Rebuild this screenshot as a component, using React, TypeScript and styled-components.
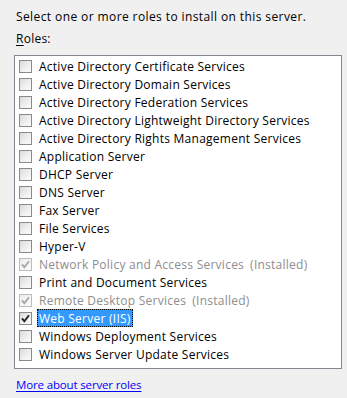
import React from "react";
import styled, { createGlobalStyle } from "styled-components";

const Global = createGlobalStyle`
  html, body { margin: 0; padding: 0; background: #f0f0f0; }
  body { font-family: "Open Sans", "Noto Sans", sans-serif; font-size: 12px; letter-spacing: 0.25px; color: #000; }
`;

const Page = styled.div`
  width: 347px;
  height: 398px;
  box-sizing: border-box;
  padding: 9px 6px 0 14px;
  display: flex;
  flex-direction: column;
`;

const Intro = styled.div`
  padding-left: 2px;
  line-height: 16px;
  height: 16px;
  letter-spacing: 0.4px;
`;

const Caption = styled.div`
  padding-left: 2px;
  margin-top: 6px;
  line-height: 16px;
  height: 16px;
  & u { text-decoration: underline; text-underline-offset: 2px; }
`;

const ListBox = styled.div`
  margin-top: 8px;
  width: 328px;
  height: 314px;
  box-sizing: border-box;
  border: 1px solid #828790;
  background: #fff;
  padding: 1px 0 0 4px;
  display: flex;
  flex-direction: column;
`;

const Row = styled.div`
  height: 18px;
  display: flex;
  align-items: center;
`;

const Box = styled.span<{ $disabled?: boolean }>`
  width: 13px;
  height: 13px;
  box-sizing: border-box;
  border: 1px solid ${(p) => (p.$disabled ? "#bcbcbc" : "#8a8a8a")};
  background: ${(p) =>
    p.$disabled
      ? "linear-gradient(135deg, #ececec 0%, #f6f6f6 60%, #fcfcfc 100%)"
      : "linear-gradient(135deg, #dadada 0%, #eeeeee 50%, #fbfbfb 100%)"};
  display: flex;
  align-items: center;
  justify-content: center;
  flex: none;
  margin-right: 5px;
`;

const Label = styled.span<{ $disabled?: boolean; $selected?: boolean }>`
  display: inline-flex;
  align-items: center;
  height: 18px;
  box-sizing: border-box;
  padding: 0 2px;
  white-space: nowrap;
  color: ${(p) => (p.$selected ? "#fff" : p.$disabled ? "#8d8d8d" : "#000")};
  background: ${(p) => (p.$selected ? "#3399ff" : "transparent")};
  outline: ${(p) => (p.$selected ? "1px dotted #000" : "none")};
  outline-offset: -1px;
`;

const Installed = styled.span`
  margin-left: 6px;
`;

const Link = styled.a`
  margin-top: 8px;
  margin-left: 2px;
  color: #0000ff;
  font-size: 11.5px;
  letter-spacing: -0.15px;
  text-decoration: underline;
  text-underline-offset: 2px;
  line-height: 16px;
  cursor: pointer;
  align-self: flex-start;
`;

const Check = ({ color }: { color: string }) => (
  <svg width="9" height="9" viewBox="0 0 9 9">
    <path d="M1 4.3 L3.4 7.3 L8 1.2" fill="none" stroke={color} strokeWidth="1.9" />
  </svg>
);

type Item = { name: string; state?: "checked" | "installed"; selected?: boolean };

const items: Item[] = [
  { name: "Active Directory Certificate Services" },
  { name: "Active Directory Domain Services" },
  { name: "Active Directory Federation Services" },
  { name: "Active Directory Lightweight Directory Services" },
  { name: "Active Directory Rights Management Services" },
  { name: "Application Server" },
  { name: "DHCP Server" },
  { name: "DNS Server" },
  { name: "Fax Server" },
  { name: "File Services" },
  { name: "Hyper-V" },
  { name: "Network Policy and Access Services", state: "installed" },
  { name: "Print and Document Services" },
  { name: "Remote Desktop Services", state: "installed" },
  { name: "Web Server (IIS)", state: "checked", selected: true },
  { name: "Windows Deployment Services" },
  { name: "Windows Server Update Services" },
];

export default function App() {
  return (
    <>
      <Global />
      <Page>
        <Intro>Select one or more roles to install on this server.</Intro>
        <Caption>
          <u>R</u>oles:
        </Caption>
        <ListBox>
          {items.map((it) => {
            const disabled = it.state === "installed";
            return (
              <Row key={it.name}>
                <Box $disabled={disabled}>
                  {it.state === "checked" && <Check color="#222" />}
                  {disabled && <Check color="#a8a8a8" />}
                </Box>
                <Label $disabled={disabled} $selected={it.selected}>
                  {it.name}
                  {disabled && <Installed>(Installed)</Installed>}
                </Label>
              </Row>
            );
          })}
        </ListBox>
        <Link>More about server roles</Link>
      </Page>
    </>
  );
}
